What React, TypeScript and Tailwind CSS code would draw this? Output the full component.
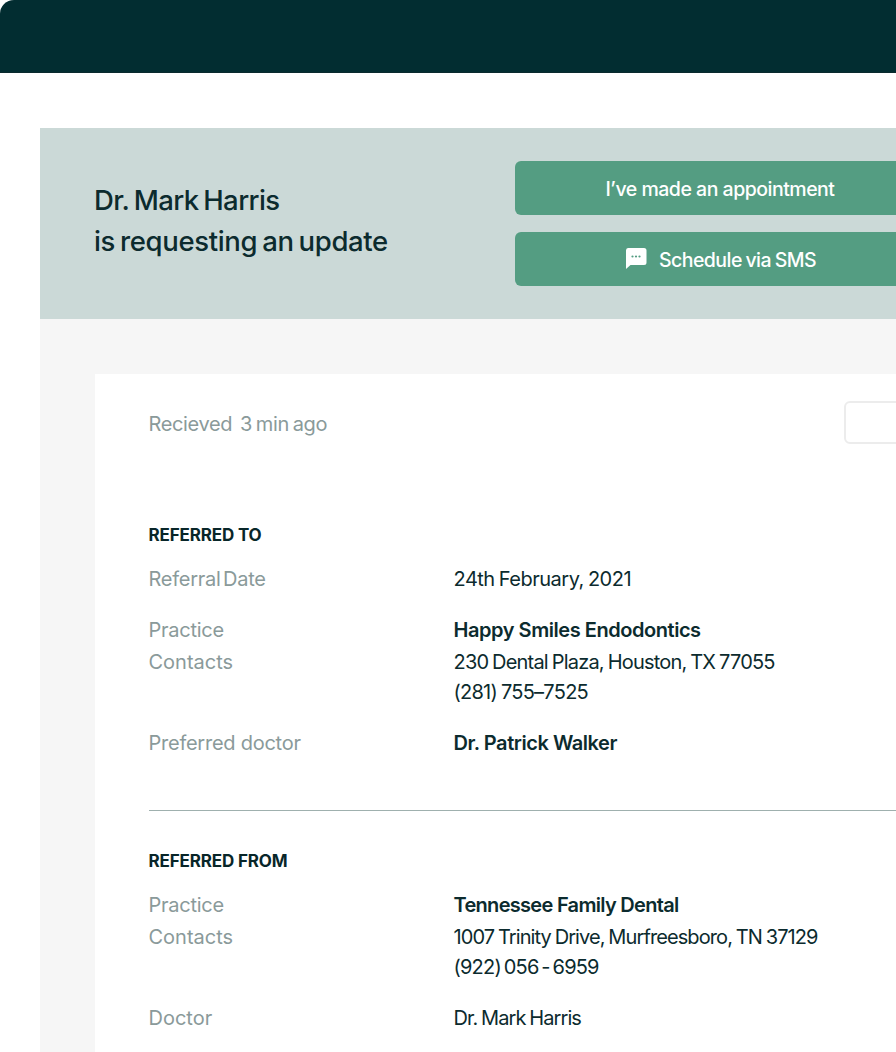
export default function App() {
  const font = { fontFamily: "Inter, 'Open Sans', sans-serif" };
  return (
    <div style={font} className="w-[896px] h-[1052px] overflow-hidden bg-white">
      <div className="h-[73px] w-[896px] rounded-tl-[14px] bg-[#022d31] border-b border-[#0a2a2e]" />
      <div className="pl-10 pt-[55px] w-[1000px]">
        <div className="h-[191px] bg-[#cbd9d7] flex items-start">
          <div className="pl-[54px] w-[475px] pt-[52px] text-[27.500px] leading-[41px] font-medium tracking-[-0.35px] [word-spacing:-2px] text-[#0c2b2e]">
            <div className="tracking-[-0.6px]">Dr. Mark Harris</div>
            <div>is requesting an update</div>
          </div>
          <div className="pt-[33px] flex flex-col gap-[17px]">
            <div className="w-[410px] h-[54px] pt-[4px] rounded-[6px] bg-[#549d82] text-white flex items-center justify-center text-[19.500px] font-medium tracking-[-0.5px]">
              I’ve made an appointment
            </div>
            <div className="w-[410px] h-[54px] pt-[4px] pl-px rounded-[6px] bg-[#549d82] text-white flex items-center justify-center gap-[12px] text-[19.500px] font-medium tracking-[-0.55px] [word-spacing:-1px]">
              <svg width="22" height="21" viewBox="0 0 22 21" className="-mt-[5px]">
                <path d="M3 0h16a2.500 2.500 0 0 1 2.500 2.500v12a2.500 2.500 0 0 1-2.500 2.500H5.500L1 21V2.500A2.500 2.500 0 0 1 3 0z" fill="#fff" />
                <circle cx="7.500" cy="8.500" r="1.100" fill="#549d82" />
                <circle cx="11" cy="8.500" r="1.100" fill="#549d82" />
                <circle cx="14.500" cy="8.500" r="1.100" fill="#549d82" />
              </svg>
              Schedule via SMS
            </div>
          </div>
        </div>
        <div className="bg-[#f6f6f6] pl-[55px] pt-[55px] h-[733px]">
          <div className="bg-white pl-[54px] pt-[28px] h-[700px]">
            <div className="flex items-start h-[42px] text-[20px] text-[#8a9a9a] tracking-[-0.35px] -ml-[0.5px]">
              <div className="w-[695px] leading-[44px] [word-spacing:-1.500px]">Recieved <span className="ml-[4px]">3 min ago</span></div>
              <div className="-mt-px w-[120px] h-[43px] border-2 border-[#ececec] rounded-[6px]" />
            </div>
            <div className="pr-[150px] -ml-[0.5px]">
              <div className="mt-[79px] text-[17px] leading-[24px] font-bold text-[#082629] tracking-[-0.15px]">REFERRED TO</div>
              <Row label="Referral Date" labelCls="tracking-[-0.25px] [word-spacing:-3px]" mt="mt-[17px]"><div className="tracking-[-0.5px] [word-spacing:-1px]">24th February, 2021</div></Row>
              <Row label="Practice" labelCls="tracking-[-0.25px]" mt="mt-[21px]"><b className="font-semibold">Happy Smiles Endodontics</b></Row>
              <Row label="Contacts" labelCls="tracking-[0px]" mt="mt-[2px]">
                <div className="tracking-[-0.8px] [word-spacing:-1px]">230 Dental Plaza, Houston, TX 77055</div>
                <div className="tracking-[-0.75px] [word-spacing:-1px]">(281) 755–7525</div>
              </Row>
              <Row label="Preferred doctor" labelCls="tracking-[-0.25px]" mt="mt-[21px]"><b className="font-semibold">Dr. Patrick Walker</b></Row>
              <div className="mt-[52px] h-px bg-[#9fb0ae] w-[800px]" />
              <div className="mt-[38px] text-[17px] leading-[24px] font-bold text-[#082629] tracking-[-0.15px]">REFERRED FROM</div>
              <Row label="Practice" labelCls="tracking-[-0.25px]" mt="mt-[17px]"><b className="font-semibold tracking-[-0.7px]">Tennessee Family Dental</b></Row>
              <Row label="Contacts" labelCls="tracking-[0px]" mt="mt-[2px]">
                <div className="tracking-[-0.9px] [word-spacing:-1px]">1007 Trinity Drive, Murfreesboro, TN 37129</div>
                <div className="tracking-[-0.8px] [word-spacing:-2px]">(922) 056 - 6959</div>
              </Row>
              <Row label="Doctor" labelCls="tracking-[0px]" mt="mt-[21px]"><div className="tracking-[-0.9px] [word-spacing:-1px]">Dr. Mark Harris</div></Row>
            </div>
          </div>
        </div>
      </div>
    </div>
  );
}

function Row({ label, labelCls, mt, children }: { label: string; labelCls: string; mt: string; children: React.ReactNode }) {
  return (
    <div className={`flex text-[20px] leading-[30px] tracking-[-0.45px] ${mt}`}>
      <div className={`w-[305px] shrink-0 text-[#8a9a9a] ${labelCls}`}>{label}</div>
      <div className="text-[#0c2b2e] whitespace-nowrap">{children}</div>
    </div>
  );
}
